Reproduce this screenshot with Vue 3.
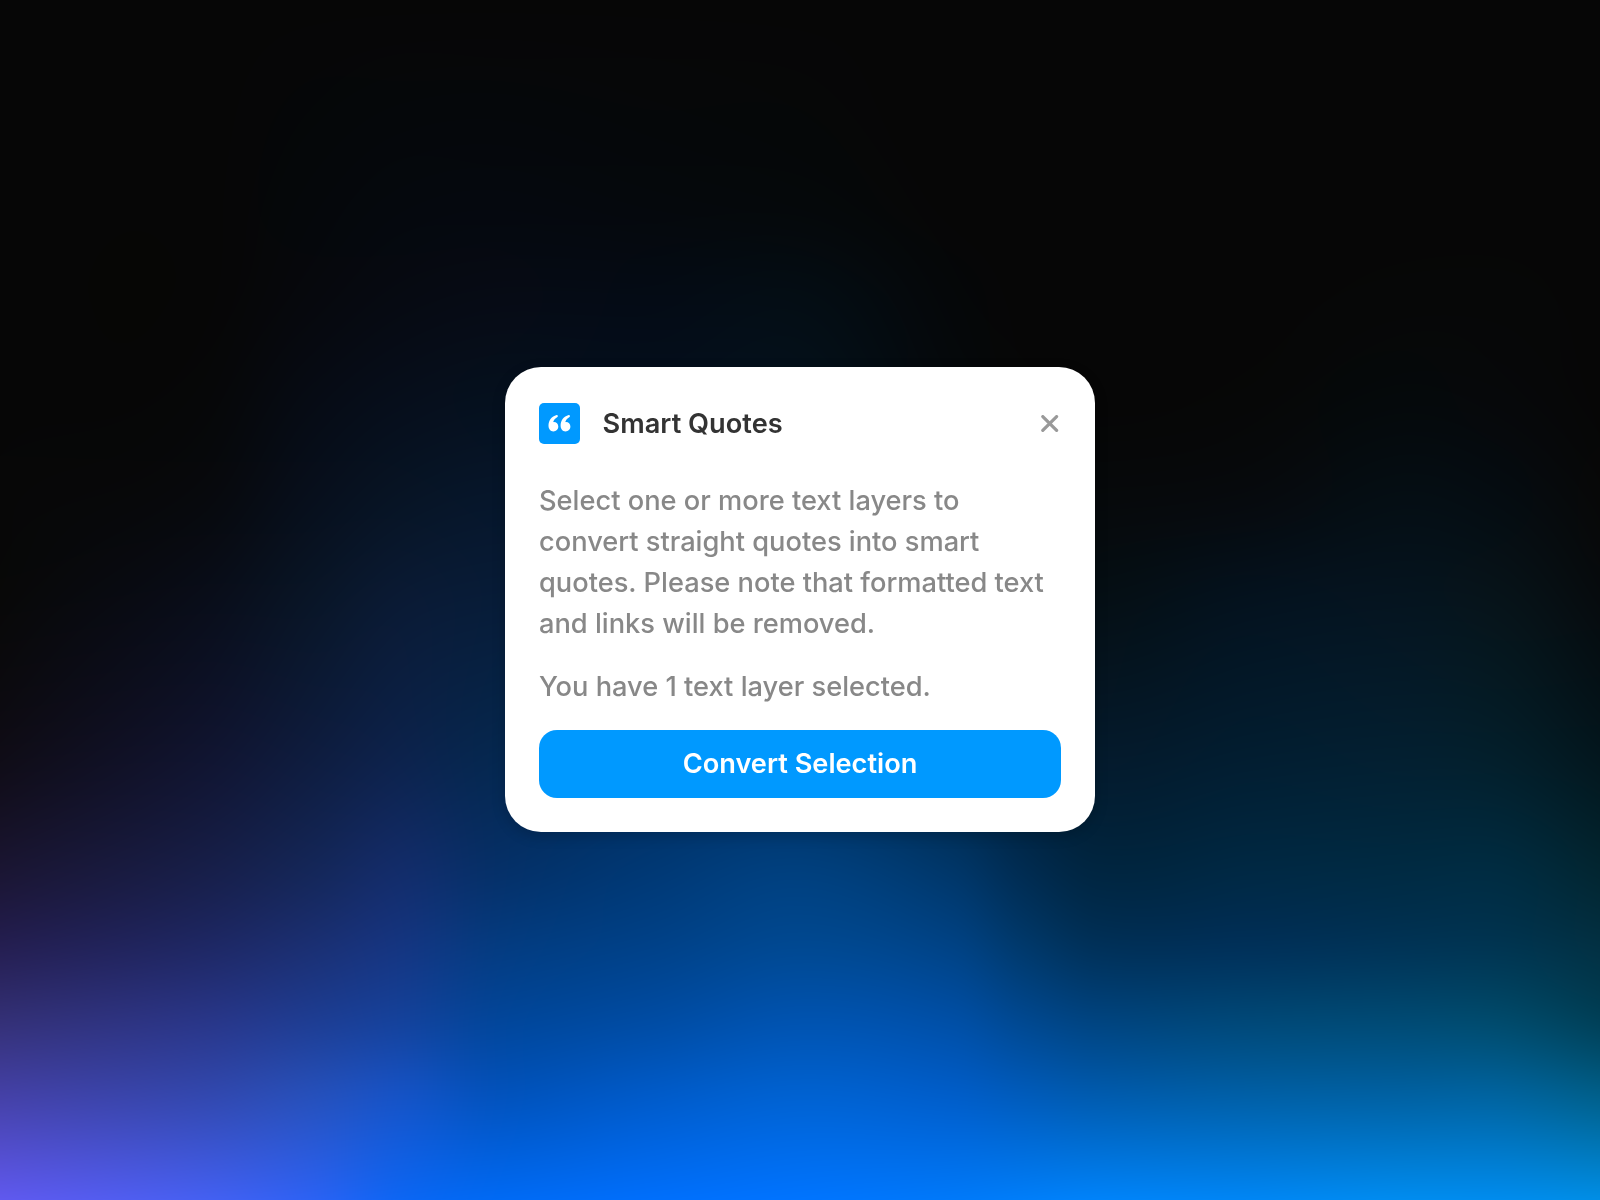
<script setup>
import { onMounted, ref } from 'vue'

const WIDTH = 1600
const HEIGHT = 1200

// Backdrop colour mesh: [x, one colour per row], blended with cubic curves in both directions.
const rows = [0, 200, 300, 400, 500, 600, 753, 868, 944, 1021, 1097, 1200]
const mesh = [
  [0, ['060606', '060606', '060606', '060606', '070707', '080808', '0f0c16', '1a1532', '241e50', '343077', '4541a8', '6059ef']],
  [200, ['060606', '060606', '060606', '060708', '07090d', '090d19', '10142f', '171e48', '1e2763', '293688', '3348b0', '4560f2']],
  [310, ['060606', '05070a', '06080d', '060b14', '070f1c', '091527', '0e1c3e', '142658', '1a2f72', '1e3d93', '2650bc', '2c62f4']],
  [400, ['060606', '05080d', '060a12', '060e1b', '071425', '0a1a34', '0c224b', '122c69', '143580', '14429c', '1553c6', '0d66f4']],
  [500, ['060606', '05080e', '060b15', '05101e', '06162b', '071c38', '05274f', '053068', '043b80', '02469b', '0253be', '006af5']],
  [650, ['060606', '05080c', '040b15', '040f1e', '05152b', '051d3c', '042c5a', '003874', '004188', '004ca4', '005bca', '006ffc']],
  [800, ['060606', '05080a', '040d14', '04111c', '051828', '062038', '042d59', '003f7d', '004891', '0053b0', '0062d2', '0074ff']],
  [950, ['060606', '060606', '050709', '05090c', '060c12', '06111e', '042440', '003668', '004284', '004fa6', '005eca', '0079fa']],
  [1025, ['060606', '060606', '060606', '060707', '06090c', '060f18', '041d33', '002b50', '00386a', '004890', '005cbc', '007efa']],
  [1100, ['060606', '060606', '060606', '060606', '06090b', '050f15', '041a2c', '002540', '003058', '004480', '005cb0', '0083fa']],
  [1250, ['060606', '060606', '060606', '060707', '060a0e', '04121e', '021d30', '002843', '003058', '004878', '0060a8', '0086f5']],
  [1400, ['060606', '060606', '060707', '05090b', '050e14', '05141f', '031f30', '002a42', '003355', '004a74', '0062a4', '008cf0']],
  [1500, ['060606', '060606', '060707', '06080a', '050c11', '061319', '031e2a', '002b40', '003450', '004a6c', '0064a0', '008cee']],
  [1600, ['060606', '060606', '060606', '060606', '070808', '060b0e', '03161d', '022530', '023042', '004058', '00608c', '008ee6']]
].map(([x, colors]) => [x, colors.map((c) => [0, 2, 4].map((i) => parseInt(c.slice(i, i + 2), 16)))])

// Samples a smooth curve through (stops[i], values[i]) at every whole pixel.
function curve(stops, values, length) {
  const last = stops.length - 1
  const slope = (i) => {
    const a = Math.max(i - 1, 0)
    const b = Math.min(i + 1, last)
    return (values[b] - values[a]) / (stops[b] - stops[a])
  }
  const out = new Float32Array(length)
  let k = 0
  for (let p = 0; p < length; p++) {
    while (k < last - 1 && p >= stops[k + 1]) k++
    const h = stops[k + 1] - stops[k]
    const t = (p - stops[k]) / h
    const t2 = t * t
    const t3 = t2 * t
    out[p] =
      (2 * t3 - 3 * t2 + 1) * values[k] +
      (t3 - 2 * t2 + t) * h * slope(k) +
      (3 * t2 - 2 * t3) * values[k + 1] +
      (t3 - t2) * h * slope(k + 1)
  }
  return out
}

const backdrop = ref(null)

onMounted(() => {
  const context = backdrop.value.getContext('2d')
  const image = context.createImageData(WIDTH, HEIGHT)
  const stopsX = mesh.map(([x]) => x)
  for (let channel = 0; channel < 3; channel++) {
    const columns = mesh.map(([, colors]) => curve(rows, colors.map((c) => c[channel]), HEIGHT))
    for (let y = 0; y < HEIGHT; y++) {
      const line = curve(stopsX, columns.map((c) => c[y]), WIDTH)
      for (let x = 0; x < WIDTH; x++) image.data[(y * WIDTH + x) * 4 + channel] = line[x]
    }
  }
  for (let i = 3; i < image.data.length; i += 4) image.data[i] = 255
  context.putImageData(image, 0, 0)
})
</script>

<template>
  <main class="stage">
    <canvas ref="backdrop" class="backdrop" :width="WIDTH" :height="HEIGHT" aria-hidden="true"></canvas>
    <section class="card">
      <header class="header">
        <span class="logo">
          <svg width="41" height="41" viewBox="0 0 41 41" fill="#fff">
            <path d="M17.6 12C12.7 13.4 9.5 17.4 9.5 22.6C9.5 26.1 11.4 28.4 14.4 28.4C17.2 28.4 19.3 26.4 19.3 23.6C19.3 21 17.4 19.1 14.9 19.1C14.6 19.1 14.3 19.1 14.1 19.2C14.7 17.1 16.2 15.4 18.1 14.3C19.4 13.5 18.9 11.7 17.6 12Z" />
            <path d="M29.7 12C24.8 13.4 21.6 17.4 21.6 22.6C21.6 26.1 23.5 28.4 26.5 28.4C29.3 28.4 31.4 26.4 31.4 23.6C31.4 21 29.5 19.1 27 19.1C26.7 19.1 26.4 19.1 26.2 19.2C26.8 17.1 28.3 15.4 30.2 14.3C31.5 13.5 31 11.7 29.7 12Z" />
          </svg>
        </span>
        <h1 class="title">Smart Quotes</h1>
        <button class="close" aria-label="Close">
          <svg width="18" height="18" viewBox="0 0 18 18" fill="none" stroke="#999" stroke-width="3.2" stroke-linecap="round">
            <path d="M1.8 1.6L15.6 15.4M15.6 1.6L1.8 15.4" />
          </svg>
        </button>
      </header>
      <p class="text">Select one or more text layers to<br />convert straight quotes into smart<br />quotes. Please note that formatted text<br />and links will be removed.</p>
      <p class="text status">You have 1 text layer selected.</p>
      <button class="convert">Convert Selection</button>
    </section>
  </main>
</template>

<style>
body {
  margin: 0;
  background: #060606;
}
</style>

<style scoped>
.stage {
  position: relative;
  display: flex;
  align-items: flex-start;
  justify-content: center;
  box-sizing: border-box;
  width: 1600px;
  height: 1200px;
  padding-top: 367px;
  overflow: hidden;
  font-family: Inter, "Liberation Sans", sans-serif;
}
.backdrop {
  position: absolute;
  inset: 0;
}
.card {
  position: relative;
  box-sizing: border-box;
  display: flex;
  flex-direction: column;
  width: 590px;
  height: 465px;
  padding: 36px 34px 34px;
  border-radius: 36px;
  background: #fff;
  box-shadow: 0 4px 14px rgba(0, 0, 0, 0.18);
}
.header {
  display: flex;
  align-items: center;
  height: 41px;
}
.logo {
  width: 41px;
  height: 41px;
  border-radius: 5px;
  background: #09f;
}
.logo svg,
.close svg {
  display: block;
}
.title {
  margin: 0 auto 0 22.6px;
  color: #333;
  font-size: 27.2px;
  font-weight: 600;
  line-height: 41px;
}
.close {
  padding: 0;
  margin-right: 2px;
  border: 0;
  background: none;
}
.text {
  margin: 36px 0 0;
  color: #888;
  font-size: 27.24px;
  font-weight: 500;
  line-height: 41px;
  white-space: nowrap;
}
.status {
  margin-top: 22px;
}
.convert {
  height: 68px;
  margin-top: auto;
  padding: 0 0 2px;
  border: 0;
  border-radius: 18px;
  background: #09f;
  color: #fff;
  font: 600 27.2px Inter, "Liberation Sans", sans-serif;
}
</style>
